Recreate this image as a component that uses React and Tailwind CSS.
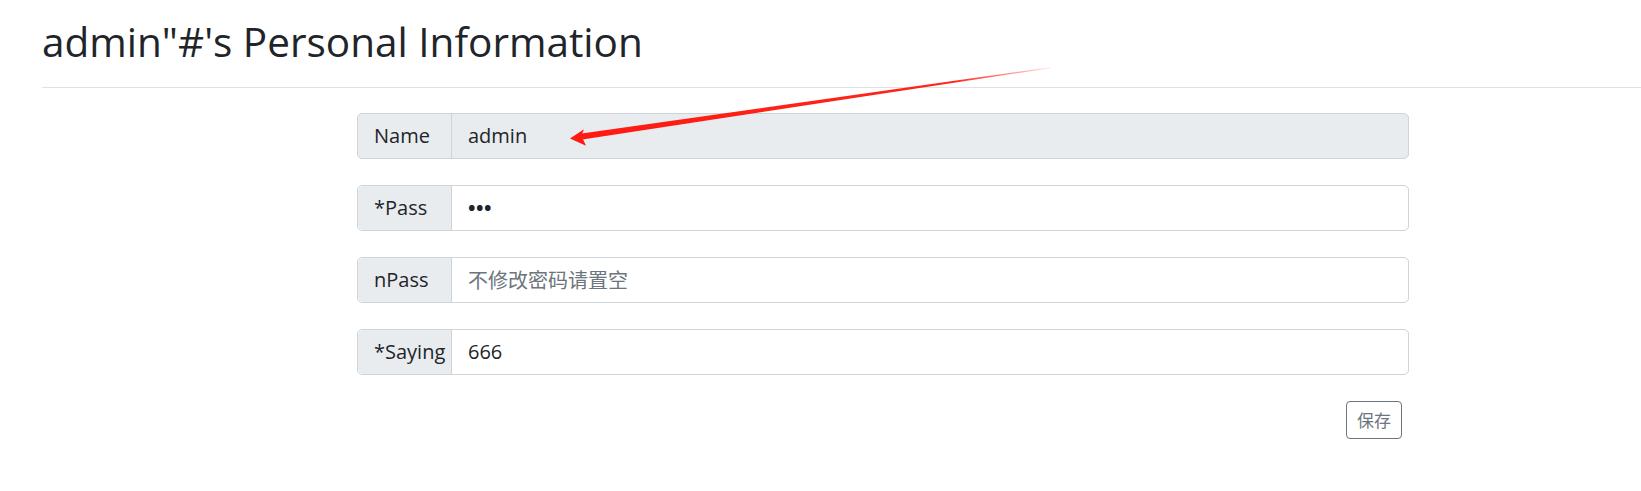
import React from "react";

const FONT = { fontFamily: '"Open Sans", "Noto Sans CJK SC", sans-serif' };

function Row({ label, children, disabled }) {
  return (
    <div
      className={`flex h-[46px] rounded-[5px] border border-[#ced4da] ${
        disabled ? "bg-[#e9ecef]" : "bg-white"
      }`}
    >
      <div className="flex w-[94px] shrink-0 items-center rounded-l-[5px] border-r border-[#ced4da] bg-[#e9ecef] pl-[16px] text-[20px] text-[#212529]">
        {label}
      </div>
      <div className="flex flex-1 items-center pl-[16px] text-[20px]">{children}</div>
    </div>
  );
}

export default function App() {
  return (
    <div
      className="relative h-[491px] w-full overflow-hidden bg-white text-[#212529]"
      style={FONT}
    >
      <div className="pt-[17px] pl-[42px]">
        <h1 className="text-[40.5px] leading-[50px] font-normal text-[#212529]">
          admin"#'s Personal Information
        </h1>
        <div className="mt-[20px] h-px w-full bg-[#dee2e6]" />
      </div>

      <div className="ml-[357px] mt-[25px] flex w-[1052px] flex-col gap-[26px]">
        <Row label="Name" disabled>
          <span>admin</span>
        </Row>
        <Row label="*Pass">
          <span className="text-[20px] font-bold tracking-[0.5px]">•••</span>
        </Row>
        <Row label="nPass">
          <span className="text-[#6c757d]" style={{ fontFamily: '"Noto Sans CJK SC", sans-serif' }}>
            不修改密码请置空
          </span>
        </Row>
        <Row label="*Saying">
          <span>666</span>
        </Row>
        <div className="flex justify-end pr-[7px]">
          <button
            className="flex h-[38px] w-[56px] items-center justify-center rounded-[4px] border border-[#6c757d] bg-white text-[17px] text-[#6c757d]"
            style={{ fontFamily: '"Noto Sans CJK SC", sans-serif' }}
          >
            保存
          </button>
        </div>
      </div>

      <svg
        className="pointer-events-none absolute left-0 top-0"
        width="1641"
        height="491"
        viewBox="0 0 1641 491"
      >
        <defs>
          <linearGradient id="fade" x1="570" y1="138" x2="1050" y2="68" gradientUnits="userSpaceOnUse">
            <stop offset="0" stopColor="#ff1a10" stopOpacity="1" />
            <stop offset="0.8" stopColor="#ff1a10" stopOpacity="0.95" />
            <stop offset="1" stopColor="#ff1a10" stopOpacity="0.1" />
          </linearGradient>
        </defs>
        <polygon points="582.4,139.4 581.6,133.6 1049.9,67.2 1050.1,68.2" fill="url(#fade)" />
        <polygon points="570,138.5 584,129.3 581.8,134.5 583,139.2 586,145.7" fill="#ff1a10" />
      </svg>
    </div>
  );
}
